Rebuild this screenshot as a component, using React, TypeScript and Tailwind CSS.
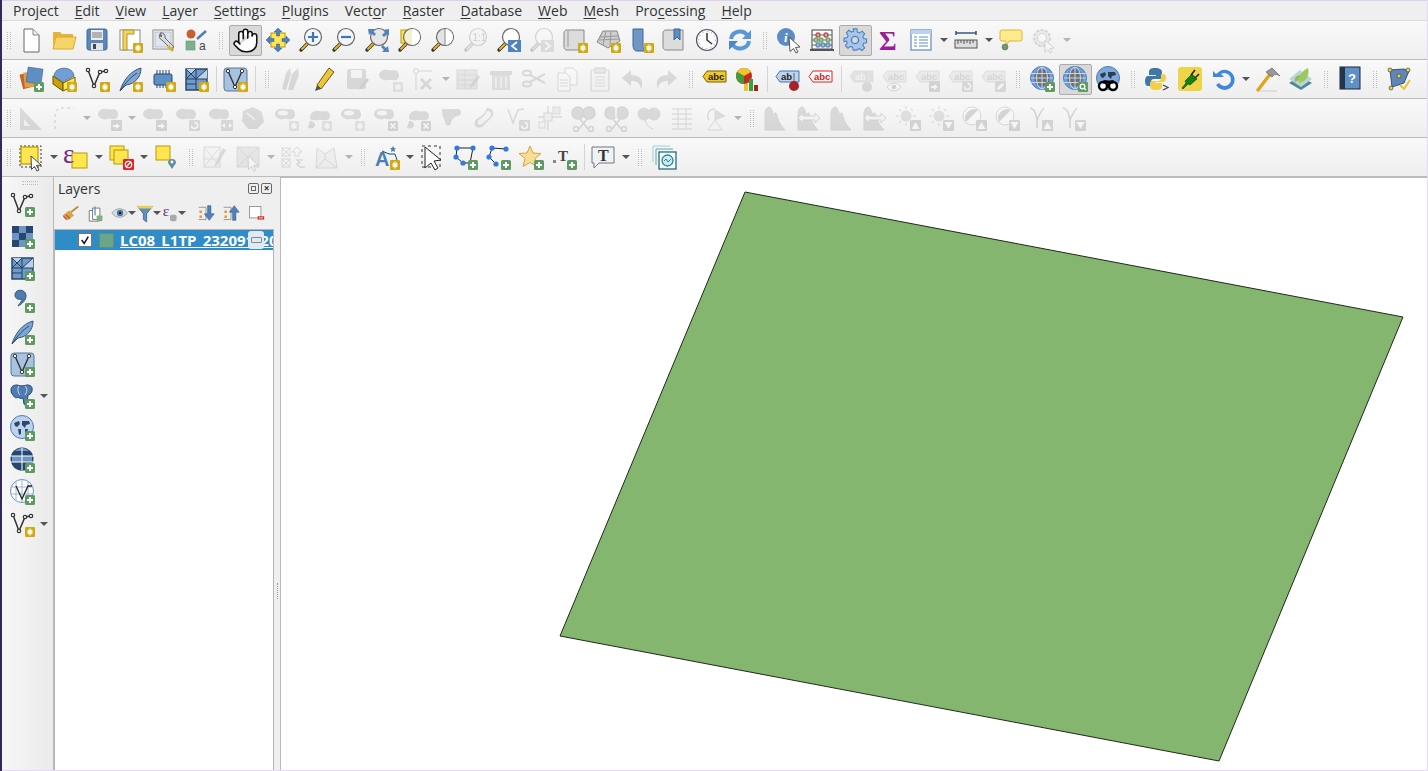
import type { ReactNode } from "react";
import { Hand } from "lucide-react";

const PlusB = () => (
  <g>
    <rect x="15" y="15" width="10" height="10" rx="1.5" fill="#5f9a62" />
    <path d="M20 17v6M17 20h6" stroke="#fff" strokeWidth="2" />
  </g>
);
const StarB = () => (
  <g>
    <rect x="15" y="15" width="10" height="10" rx="1" fill="#d3a912" />
    <path d="M20 16.5v7M17 20h6M17.8 17.8l4.4 4.4M22.2 17.8l-4.4 4.4" stroke="#fff" strokeWidth="1.2" />
  </g>
);
const ArrB = ({ d = "M17 20h3v-2l4 3-4 3v-2h-3z" }: { d?: string }) => (
  <g>
    <rect x="14" y="14" width="11" height="11" rx="1" fill="#777" />
    <path d={d} transform="translate(-1 -1)" fill="#fff" />
  </g>
);
const RotB = () => (
  <g>
    <rect x="14" y="14" width="11" height="11" rx="1" fill="#888" />
    <path d="M16.5 19.5a3 3 0 1 0 3-3" fill="none" stroke="#fff" strokeWidth="1.5" />
  </g>
);
const CrossB = () => (
  <g>
    <rect x="15" y="15" width="10" height="10" rx="1" fill="#777" />
    <path d="M17.5 17.5l5 5M22.5 17.5l-5 5" stroke="#fff" strokeWidth="1.6" />
  </g>
);
const UpB = () => (
  <g>
    <rect x="14" y="14" width="11" height="11" rx="1" fill="#777" />
    <path d="M19.5 16l4 7h-8z" fill="#fff" />
  </g>
);
const DownB = () => (
  <g>
    <rect x="14" y="14" width="11" height="11" rx="1" fill="#777" />
    <path d="M19.5 23l4-7h-8z" fill="#fff" />
  </g>
);

const Mag = ({ fill = "#f2f5fa", children, handle = "#e8b820" }: { fill?: string; children?: ReactNode; handle?: string }) => (
  <g>
    <path d="M9 15L2 22" stroke="#333" strokeWidth="3.4" strokeLinecap="round" />
    <path d="M8.5 15.5L2.5 21.5" stroke={handle} strokeWidth="1.8" />
    <circle cx="14" cy="9" r="8.5" fill={fill} stroke="#666" strokeWidth="1.2" />
    {children}
  </g>
);
const Vline = () => (
  <g fill="#fff" stroke="#333" strokeWidth="1.2">
    <path d="M3 3l6 16 6-14 6-1" fill="none" strokeWidth="1.5" />
    <circle cx="3" cy="3" r="1.7" />
    <circle cx="9" cy="19" r="1.7" />
    <circle cx="15" cy="5" r="1.7" />
    <circle cx="21" cy="4" r="1.7" />
  </g>
);
const Feather = () => (
  <g>
    <path d="M2 24C5 14 12 4 23 1c0 9-6 16-15 17z" fill="#7ea6d2" stroke="#34577f" />
    <path d="M2 24C8 15 13 10 19 6" stroke="#28496e" fill="none" />
  </g>
);
const Chip = () => (
  <g>
    <rect x="3" y="7" width="18" height="11" rx="1.5" fill="#5b8fc6" stroke="#27486e" />
    <path d="M6 3v4M9 3v4M12 3v4M15 3v4M18 3v4M6 18v3M9 18v3M12 18v3M15 18v3M18 18v3" stroke="#27486e" />
  </g>
);
const Mesh = () => (
  <g>
    <rect x="2" y="2" width="21" height="21" fill="#6f9acb" stroke="#23405f" strokeWidth="1.4" />
    <path d="M2 2h10L7 7zM12 12l11-10v10z" fill="#bdd0e6" />
    <path d="M2 2l10 10M12 2L2 12M12 2v21M2 12h21M2 17h10M23 2L12 12" stroke="#23405f" />
  </g>
);
const Virtual = () => (
  <g>
    <rect x="1" y="1" width="23" height="23" rx="3" fill="#a8c3e0" stroke="#55779c" />
    <path d="M5 4l7 16 7-16" fill="none" stroke="#333" strokeWidth="1.4" />
    <circle cx="5" cy="4" r="1.7" fill="#fff" stroke="#333" />
    <circle cx="12" cy="20" r="1.7" fill="#fff" stroke="#333" />
    <circle cx="19" cy="4" r="1.7" fill="#fff" stroke="#333" />
  </g>
);
const GridGlobe = () => (
  <g>
    <circle cx="12" cy="11" r="11.5" fill="#6fa0dc" stroke="#4f7cb4" />
    <ellipse cx="12" cy="11" rx="8" ry="9" fill="#707070" />
    <path d="M1 6.5h22M1 11h22M1 15.5h22M12 0v22" stroke="#c4d8f2" />
    <ellipse cx="12" cy="11" rx="5.5" ry="11" fill="none" stroke="#c4d8f2" />
  </g>
);
const MapGlobe = ({ fill = "#bcd2ee", dark = "#2e4766" }: { fill?: string; dark?: string }) => (
  <g>
    <circle cx="12" cy="11" r="11.5" fill={fill} stroke="#4f7cb4" />
    <path d="M4 7l5-2 1 3-3 3-2-1zM12 5l7 0 1 3-4 1-1 3-3-3zM8 13l3 0 0 5-2 1zM15 13l3 0-1 4-2-1z" fill={dark} />
  </g>
);
const Blob = () => <path d="M1 8c0-4 5-6 9-5s8-1 10 2 1 7-2 8-5-1-8 0-9-1-9-5z" fill="#8a8a86" />;
const AbcTag = ({ fill = "#efc92a", stroke = "#7a6100", text = "abc", color = "#222" }: { fill?: string; stroke?: string; text?: string; color?: string }) => (
  <g>
    <path d="M5 4h19v11H5L1 9.5z" fill={fill} stroke={stroke} />
    <text x="6" y="13" fontSize="9.5" fontWeight="700" fill={color} fontFamily="Liberation Sans, sans-serif">{text}</text>
  </g>
);
const Scissor = () => (
  <g fill="none" stroke="#777" strokeWidth="1.5">
    <ellipse cx="7" cy="7" rx="6" ry="6" fill="#8a8a86" />
    <ellipse cx="18" cy="7" rx="6" ry="6" fill="#8a8a86" />
    <path d="M9 13l8 10M16 13L8 23" />
    <circle cx="5" cy="23" r="2.4" />
    <circle cx="20" cy="23" r="2.4" />
  </g>
);
const Histo = () => <path d="M1 24V8c0-4 2-7 4-7s3 3 4 6 2-1 3 0 1 9 9 17z" fill="#8a8a86" stroke="#777" />;
const HistoArrows = () => (
  <g>
    <Histo />
    <path d="M1 12l5-5v3h12V7l5 5-5 5v-3H6v3z" fill="#eee" stroke="#777" />
  </g>
);
const Sun = () => (
  <g>
    <circle cx="10" cy="10" r="5.5" fill="#a5a070" />
    <path d="M10 0v3M10 17v3M0 10h3M17 10h3M3 3l2 2M15 3l2 2M3 17l2-2" stroke="#a5a070" strokeWidth="1.3" />
  </g>
);
const Contrast = () => (
  <g>
    <circle cx="10" cy="10" r="9" fill="#fff" stroke="#777" />
    <path d="M4 16A9 9 0 0 1 16 4z" fill="#777" />
  </g>
);
const Gamma = () => <path d="M2 2c5 1 6 6 7 12v8M16 2c-3 3-5 7-7 12" fill="none" stroke="#777" strokeWidth="1.6" />;
const Sel = () => <rect x="2" y="2" width="17" height="17" fill="#ffe54f" stroke="#b89a00" strokeWidth="1.2" />;
const Arrow = () => <path d="M12 11l10 9-4.5.5 2.5 4.5-2 1-2.5-4.5-3 3z" fill="#fff" stroke="#333" strokeWidth="0.9" />;

const icons: Record<string, ReactNode> = {
  new: (
    <g>
      <path d="M5 1h9l6 6v17H5z" fill="#fff" stroke="#666" />
      <path d="M14 1v6h6" fill="#eee" stroke="#888" />
    </g>
  ),
  open: (
    <g>
      <path d="M1 4h7l2 2h11v5H3l-2 8z" fill="#e4b53a" />
      <path d="M4 9h20l-3 12H1z" fill="#f6d568" stroke="#d8a92c" />
    </g>
  ),
  save: (
    <g>
      <rect x="2" y="1" width="20" height="21" rx="2" fill="#5b86b8" stroke="#3f6a9c" />
      <rect x="6" y="2" width="12" height="10" fill="#eee" />
      <path d="M7 5h10M7 7h10M7 9h10" stroke="#777" />
      <rect x="6" y="15" width="12" height="7" fill="#e4e4e4" />
      <rect x="8" y="16" width="3" height="5" fill="#445" />
    </g>
  ),
  layoutNew: (
    <g>
      <rect x="2" y="2" width="20" height="20" fill="#fff" stroke="#888" />
      <path d="M5 2h11v4H9v16H5z" fill="#f2d45c" stroke="#b5932a" />
      <StarB />
    </g>
  ),
  layoutMgr: (
    <g>
      <rect x="2" y="2" width="20" height="19" fill="#fff" stroke="#888" />
      <rect x="4" y="4" width="16" height="15" fill="#dbe6f2" stroke="#bbb" />
      <path d="M9 6a4 4 0 0 0 2 6l9 9 3-2-9-9a4 4 0 0 0-5-5l2 3-1 1z" fill="#ddd" stroke="#666" />
      <path d="M17 18l5 5" stroke="#d5b33a" strokeWidth="3" />
    </g>
  ),
  style: (
    <g>
      <circle cx="7" cy="6" r="4.5" fill="#c55f2c" />
      <rect x="2" y="13" width="9" height="9" fill="#7fb08a" stroke="#598" strokeWidth="0.6" />
      <path d="M13 11l9-8" stroke="#4f7cb4" strokeWidth="2.4" />
      <text x="15" y="22" fontSize="12" fill="#444" fontFamily="Liberation Sans, sans-serif">a</text>
    </g>
  ),
  panSel: (
    <g>
      <rect x="5" y="5" width="14" height="14" fill="#ffe54f" stroke="#b89a00" />
      <path d="M12 0l4 4h-2.5v4h-3V4H8zM12 24l4-4h-2.5v-4h-3v4H8zM0 12l4-4v2.5h4v3H4V16zM24 12l-4-4v2.5h-4v3h4V16z" fill="#4f82bf" stroke="#2f5d93" strokeWidth="0.5" />
    </g>
  ),
  zoomIn: <Mag><path d="M14 4v10M9 9h10" stroke="#3f74b5" strokeWidth="2.2" /></Mag>,
  zoomOut: <Mag><path d="M9 9h10" stroke="#3f74b5" strokeWidth="2.2" /></Mag>,
  zoomFull: (
    <g>
      <Mag fill="#e6e6e6" />
      <path d="M3 1h7L8 3l3 3-2 2-3-3-2 2zM24 1v7l-2-2-3 3-2-2 3-3-2-2zM24 24h-7l2-2-3-3 2-2 3 3 2-2z" fill="#4f82bf" />
    </g>
  ),
  zoomSel: (
    <g>
      <rect x="3" y="2" width="13" height="13" fill="#ffe54f" stroke="#b89a00" />
      <Mag fill="#f3efd0" />
      <path d="M14 1a8 8 0 0 1 0 16z" fill="#fff" />
    </g>
  ),
  zoomLayer: (
    <g>
      <Mag fill="#e4e4e4" />
      <path d="M14 1a8 8 0 0 1 0 16z" fill="#fff" />
      <path d="M14 1v16" stroke="#888" />
    </g>
  ),
  zoomNative: <Mag><text x="8.5" y="13" fontSize="10" fill="#555" fontFamily="Liberation Sans, sans-serif">1:1</text></Mag>,
  zoomLast: (
    <g>
      <Mag fill="#fff" />
      <rect x="11" y="12" width="13" height="12" fill="#4f82bf" />
      <path d="M20 14l-5 4 5 4" fill="none" stroke="#fff" strokeWidth="1.8" />
    </g>
  ),
  zoomNext: (
    <g>
      <Mag fill="#fff" handle="#aaa" />
      <rect x="11" y="12" width="13" height="12" fill="#999" />
      <path d="M15 14l5 4-5 4" fill="none" stroke="#fff" strokeWidth="1.8" />
    </g>
  ),
  mapView: (
    <g>
      <path d="M4 2h17v20H4c-3 0-3-3-3-3V5s0-3 3-3z" fill="#dcdcdc" stroke="#888" />
      <path d="M5 3v16" stroke="#999" />
      <StarB />
    </g>
  ),
  map3d: (
    <g>
      <path d="M7 3h14l3 10-12 7L1 14z" fill="#cfcfcf" stroke="#888" />
      <path d="M4 9l18-1M3 12l20-1M10 3L7 17M15 3l-1 15" stroke="#999" />
      <StarB />
    </g>
  ),
  bookmarkNew: (
    <g>
      <path d="M4 1h10v16c0 4 2 6 4 6H8c-3 0-4-3-4-6z" fill="#6f97c6" stroke="#3d6696" />
      <StarB />
    </g>
  ),
  bookmarks: (
    <g>
      <path d="M4 2h17v20H4c-3 0-3-3-3-3V5s0-3 3-3z" fill="#dcdcdc" stroke="#888" />
      <path d="M12 1h6v11l-3-3-3 3z" fill="#5b8cc4" stroke="#3d6696" />
    </g>
  ),
  clock: (
    <g>
      <circle cx="12" cy="12" r="10.5" fill="#fbfbfb" stroke="#556" strokeWidth="1.2" />
      <path d="M12 5v7l5 4" stroke="#333" strokeWidth="1.5" fill="none" />
      <circle cx="12" cy="12" r="8.5" fill="none" stroke="#89a" strokeDasharray="1 3.4" />
    </g>
  ),
  refresh: (
    <g fill="none" stroke="#5b97d6" strokeWidth="4">
      <path d="M3 11C4 3 15 1 19 7" />
      <path d="M21 13c-1 8-12 10-16 4" />
      <path d="M23 2v9h-9z" fill="#5b97d6" stroke="none" />
      <path d="M1 22v-9h9z" fill="#4d86c4" stroke="none" />
    </g>
  ),
  identify: (
    <g>
      <circle cx="9" cy="9" r="9" fill="#5b8cc4" />
      <text x="7" y="14" fontSize="13" fontWeight="700" fontStyle="italic" fill="#fff" fontFamily="Liberation Serif, serif">i</text>
      <path d="M12 9l11 10-4.500.5 2.500 4.500-2 1-2.500-4.500-3.500 3z" fill="#fff" stroke="#444" strokeWidth="0.9" />
    </g>
  ),
  abacus: (
    <g>
      <rect x="2" y="2" width="20" height="19" fill="#fff" stroke="#444" />
      <path d="M0 22h24" stroke="#555" strokeWidth="2" />
      <path d="M2 7h20M2 12h20M2 17h20" stroke="#666" />
      <g fill="none" strokeWidth="1.4">
        <g stroke="#c0504d"><circle cx="8" cy="7" r="2" /><circle cx="16" cy="7" r="2" /></g>
        <g stroke="#70a868"><circle cx="6" cy="12" r="2" /><circle cx="11" cy="12" r="2" /><circle cx="18" cy="12" r="2" /></g>
        <g stroke="#5b8cc4"><circle cx="8" cy="17" r="2" /><circle cx="13" cy="17" r="2" /><circle cx="18" cy="17" r="2" /></g>
      </g>
    </g>
  ),
  gear: (
    <g>
      <path d="M10 1h4l.6 3.4 2.2 1 2.9-2 2.8 2.9-2 2.9.9 2.2 3.1.6v4l-3.1.6-.9 2.2 2 2.9-2.8 2.8-2.9-2-2.2.9L14 24h-4l-.6-3.1-2.2-.9-2.9 2-2.8-2.8 2-2.9-.9-2.2L0 15v-4l3.6-.6.9-2.2-2-2.9L5.3 2.400l2.900 2 2.200-1z" transform="translate(1 0) scale(0.92)" fill="#a8c6ea" stroke="#4f82bf" strokeWidth="1.2" />
      <circle cx="12" cy="12" r="3.6" fill="#d8d8d8" stroke="#4f82bf" strokeWidth="1.4" />
    </g>
  ),
  sigma: <text x="3" y="22" fontSize="27" fontWeight="700" fill="#9a1d9a" fontFamily="Liberation Serif, serif">Σ</text>,
  table: (
    <g>
      <rect x="2" y="2" width="20" height="20" fill="#fff" stroke="#5b8cc4" strokeWidth="1.2" />
      <rect x="2" y="2" width="20" height="4" fill="#bcd2ea" />
      <path d="M5 9h3M10 9h9M5 12h3M10 12h9M5 15h3M10 15h9M5 18h3M10 18h9" stroke="#5b8cc4" />
    </g>
  ),
  ruler: (
    <g>
      <path d="M2 5h20M2 3v4M22 3v4" stroke="#3d5a7c" strokeWidth="1.6" />
      <rect x="1" y="12" width="22" height="8" fill="#ddd" stroke="#555" />
      <path d="M4 12v4M7 12v3M10 12v4M13 12v3M16 12v4M19 12v3" stroke="#555" />
    </g>
  ),
  tip: (
    <g>
      <path d="M3 2h18a2 2 0 0 1 2 2v7a2 2 0 0 1-2 2H10l-3 5v-5H3a2 2 0 0 1-2-2V4a2 2 0 0 1 2-2z" fill="#fdeb8e" stroke="#d9b83a" />
      <circle cx="6" cy="19" r="3" fill="#6f9a6a" stroke="#555" strokeWidth="0.5" />
    </g>
  ),
  gearPlay: (
    <g>
      <circle cx="10" cy="10" r="8" fill="#ccc" stroke="#777" strokeWidth="2" strokeDasharray="3 1.5" />
      <circle cx="10" cy="10" r="4.5" fill="#fff" stroke="#777" />
      <path d="M13 12l9 8-4 .5 2 3.5-2 1-2-3.5-3 3z" fill="#fff" stroke="#777" />
    </g>
  ),
  layers: (
    <g>
      <rect x="2" y="6" width="13" height="15" transform="rotate(-14 8 13)" fill="#c8622c" />
      <rect x="5" y="5" width="13" height="15" transform="rotate(-6 11 12)" fill="#e0a040" />
      <rect x="8" y="1" width="15" height="15" transform="rotate(8 15 9)" fill="#5f8ec4" stroke="#3d6696" strokeWidth="0.6" />
      <PlusB />
    </g>
  ),
  gpkg: (
    <g>
      <path d="M1 9l10 7v8L1 17z" fill="#c9a400" stroke="#665300" />
      <path d="M11 16l12-6v8l-12 6z" fill="#ffe54f" stroke="#665300" />
      <path d="M2 9a10 8 0 0 1 20 0l-11 6z" fill="#6f9fd8" stroke="#444" strokeWidth="0.5" />
      <StarB />
    </g>
  ),
  vline: <g><Vline /><StarB /></g>,
  vlinePlus: <g><Vline /><PlusB /></g>,
  feather: <g><Feather /><StarB /></g>,
  featherPlus: <g><Feather /><PlusB /></g>,
  chip: <g><Chip /><StarB /></g>,
  mesh: <g><Mesh /><StarB /></g>,
  meshPlus: <g><Mesh /><PlusB /></g>,
  virtual: <g><Virtual /><StarB /></g>,
  virtualPlus: <g><Virtual /><PlusB /></g>,
  pencils: (
    <g fill="#888">
      <path d="M3 22L7 6l4-5 1 6-5 16z" />
      <path d="M9 23l4-16 6-6 1 7-6 15z" />
    </g>
  ),
  pencil: (
    <g>
      <path d="M5 18L17 1l5 4L9 22z" fill="#ebc63d" stroke="#6d5a10" />
      <path d="M5 18l-2 6 6-2z" fill="#555" />
    </g>
  ),
  saveEdits: (
    <g>
      <rect x="2" y="2" width="19" height="20" rx="2" fill="#888" />
      <rect x="6" y="3" width="11" height="8" fill="#eee" />
      <path d="M14 23l2-5 6-7 2 2-6 7z" fill="#666" />
    </g>
  ),
  blobStar: <g><Blob /><StarB /></g>,
  tools: (
    <g>
      <circle cx="5" cy="4" r="2.5" fill="none" stroke="#777" />
      <path d="M7 4h14M5 7v16" stroke="#777" />
      <path d="M10 12l10 10M20 12L10 22" stroke="#888" strokeWidth="3" />
    </g>
  ),
  editTable: (
    <g>
      <rect x="1" y="3" width="20" height="19" fill="#bbb" stroke="#888" />
      <path d="M1 8h20M1 13h20M1 18h20M9 3v19" stroke="#888" />
      <path d="M13 22l2-5 7-9 2 2-7 9z" fill="#777" />
    </g>
  ),
  trash: (
    <g>
      <path d="M1 4h22v4H1z" fill="#9a8a86" />
      <path d="M3 8h18v15H3z" fill="#aaa09c" />
      <path d="M7 10v11M12 10v11M17 10v11" stroke="#eee" strokeWidth="1.4" />
    </g>
  ),
  scissors: (
    <g fill="none" stroke="#888" strokeWidth="2">
      <ellipse cx="5" cy="6" rx="4" ry="2.6" />
      <ellipse cx="5" cy="17" rx="4" ry="2.6" />
      <path d="M8 8l15 8M8 15l15-8" />
    </g>
  ),
  copy: (
    <g fill="#fff" stroke="#888">
      <path d="M10 1h8l4 4v13H10z" />
      <path d="M3 6h8l4 4v14H3z" />
      <path d="M5 13h8M5 16h8M5 19h8" />
    </g>
  ),
  paste: (
    <g fill="#eee" stroke="#888" strokeWidth="1.2">
      <rect x="3" y="3" width="18" height="21" rx="1" />
      <rect x="7" y="1" width="10" height="5" fill="#bbb" />
      <path d="M7 10h10M7 13h10M7 16h10M7 19h10" />
    </g>
  ),
  undo: <path d="M10 3L1 11l9 8v-5c6 0 9 2 10 8 3-7 1-14-10-14z" fill="#8a8a86" />,
  redo: <path d="M14 3l9 8-9 8v-5c-6 0-9 2-10 8-3-7-1-14 10-14z" fill="#8a8a86" />,
  abcYellow: <AbcTag />,
  pieBars: (
    <g>
      <circle cx="9" cy="9" r="8" fill="#c8261e" />
      <path d="M9 9V1a8 8 0 0 1 7 4z" fill="#ecc62a" />
      <path d="M9 9L2 5a8 8 0 0 1 7-4z" fill="#ecc62a" />
      <path d="M9 9v8a8 8 0 0 1-8-8 8 8 0 0 1 1-4z" fill="#3f9d3a" />
      <rect x="9" y="17" width="4" height="7" fill="#ecc62a" />
      <rect x="14" y="12" width="4" height="12" fill="#3f9d3a" />
      <rect x="19" y="18" width="4" height="6" fill="#a3261e" />
    </g>
  ),
  abPin: (
    <g>
      <AbcTag fill="#bcd4ee" stroke="#3f74b5" text="ab" />
      <path d="M19 6v9" stroke="#888" strokeWidth="1.5" />
      <circle cx="19" cy="19" r="5" fill="#a5242a" />
    </g>
  ),
  abcRed: <AbcTag fill="#fff" stroke="#e51c1c" color="#d61c1c" />,
  abPinGrey: (
    <g>
      <AbcTag fill="#aaa" stroke="#999" text="ab" color="#eee" />
      <path d="M17 5v11" stroke="#999" strokeWidth="1.5" />
      <circle cx="18" cy="20" r="5" fill="#8a8a86" />
    </g>
  ),
  abcEye: (
    <g>
      <AbcTag fill="#ccc" stroke="#999" color="#777" />
      <path d="M5 20c4-5 10-5 14 0-4 5-10 5-14 0z" fill="#fff" stroke="#777" />
      <circle cx="12" cy="20" r="2.3" fill="#777" />
    </g>
  ),
  abcArrow: <g><AbcTag fill="#ccc" stroke="#999" color="#777" /><ArrB /></g>,
  abcRotate: <g><AbcTag fill="#ccc" stroke="#999" color="#777" /><RotB /></g>,
  abcEdit: (
    <g>
      <AbcTag fill="#ccc" stroke="#999" color="#777" />
      <rect x="14" y="14" width="11" height="11" rx="1" fill="#888" />
      <path d="M16 23l1-3 4-4 2 2-4 4z" fill="#fff" />
    </g>
  ),
  globePlus: <g><GridGlobe /><PlusB /></g>,
  globeZoom: (
    <g>
      <GridGlobe />
      <rect x="15" y="15" width="10" height="10" rx="1" fill="#5f9a62" />
      <circle cx="19.5" cy="19.5" r="2.3" fill="none" stroke="#fff" strokeWidth="1.3" />
      <path d="M21 21l2 2" stroke="#fff" strokeWidth="1.3" />
    </g>
  ),
  globeFind: (
    <g>
      <MapGlobe fill="#7ea8da" dark="#2e3c4f" />
      <circle cx="7" cy="19" r="4" fill="#fff" stroke="#000" strokeWidth="2.4" />
      <circle cx="17" cy="19" r="4" fill="#fff" stroke="#000" strokeWidth="2.4" />
      <path d="M7 15h10" stroke="#000" strokeWidth="3" />
    </g>
  ),
  python: (
    <g>
      <path d="M10 1c-5 0-6 2-6 4v3h7v1H3c-2 0-3 2-3 5s1 5 3 5h3v-4c0-2 1-3 3-3h6c1 0 2-1 2-2V5c0-2-2-4-7-4z" fill="#3f78a8" />
      <path d="M11 23c5 0 6-2 6-4v-3h-7v-1h8c2 0 3-2 3-5 0-2-1-3-3-3h-2v4c0 2-1 3-3 3H7c-1 0-2 1-2 2v3c0 2 1 4 6 4z" fill="#f2cf4a" />
      <path d="M18 18l5 2.5-5 2.5" fill="none" stroke="#444" strokeWidth="1.2" />
    </g>
  ),
  plug: (
    <g>
      <rect x="0" y="0" width="24" height="24" rx="3" fill="#f0d448" />
      <path d="M4 21l4-5-1-2 7-7 5 5-7 6-2-1-5 5z" fill="#128012" stroke="#0b400b" strokeWidth="0.6" />
      <path d="M13 8l4-5M17 11l4-4" stroke="#222" strokeWidth="1.6" />
    </g>
  ),
  update: <path d="M8 4a10 10 0 1 1-4 14l3-2a6.5 6.5 0 1 0 2-9l3 3H1V4l3 3z" transform="translate(1 0)" fill="#3f87dc" />,
  hammer: (
    <g>
      <path d="M2 23L15 6" stroke="#e2a41c" strokeWidth="3.4" strokeLinecap="round" />
      <path d="M10 5l6-4 8 8c-3-2-5-2-6-1l-2 2z" fill="#999" stroke="#555" strokeWidth="0.6" />
      <path d="M3 24h18" stroke="#ccc" />
    </g>
  ),
  leaf: (
    <g>
      <path d="M0 16l11-7 12 7-11 7z" fill="#4f8a9a" />
      <path d="M0 12L11 3l12 9-11 8z" fill="#bed3d3" />
      <path d="M6 15c-1-5 2-7 6-7-1 4-3 6-6 7z" fill="#86bf55" />
      <path d="M10 16c-2-6 3-12 9-15 2 7-2 14-9 15z" fill="#9cc95f" />
    </g>
  ),
  help: (
    <g>
      <rect x="2" y="0" width="20" height="22" fill="#5f90c6" stroke="#223" />
      <rect x="2" y="0" width="5" height="22" fill="#24344a" />
      <text x="10" y="16" fontSize="13" fontWeight="700" fill="#fff" fontFamily="Liberation Sans, sans-serif">?</text>
    </g>
  ),
  topo: (
    <g>
      <path d="M3 3l14-1 5 2-5 12-12 4z" fill="#5f86b4" stroke="#33557c" />
      <circle cx="3" cy="3" r="2" fill="#ecd24a" stroke="#444" strokeWidth="0.7" />
      <circle cx="21" cy="3" r="2" fill="#ecd24a" stroke="#444" strokeWidth="0.7" />
      <circle cx="12" cy="9" r="2" fill="#ecd24a" stroke="#444" strokeWidth="0.7" />
      <circle cx="4" cy="21" r="2" fill="#ecd24a" stroke="#444" strokeWidth="0.7" />
      <path d="M13 18l4 4 6-9" fill="none" stroke="#e8c52f" strokeWidth="2" />
    </g>
  ),
  triangle: (
    <g>
      <path d="M1 1l22 23H1z" fill="#8a8a86" />
      <path d="M5 13l6 7H5z" fill="#eee" />
    </g>
  ),
  dashCurve: <path d="M3 23V9c0-4 3-7 8-7h11" fill="none" stroke="#888" strokeWidth="1.5" strokeDasharray="3 3" />,
  blobArr: <g><Blob /><ArrB /></g>,
  blobRot: <g><Blob /><RotB /></g>,
  blobScale: <g><Blob /><rect x="13" y="14" width="12" height="11" rx="1" fill="#888" /><path d="M14 19.5l3-2.500v5zM24 19.5L21 17v5z" fill="#fff" /></g>,
  hex: <g><path d="M12 1l9 5 2 10-7 7H7l-6-8 1-10z" fill="#8a8a86" /><path d="M6 7l8 7" stroke="#eee" strokeWidth="1.5" /></g>,
  ringStar: <g><Blob /><ellipse cx="9" cy="7" rx="5" ry="2.5" fill="#eee" /><StarB /></g>,
  partStar: <g><path d="M3 12c0-6 5-8 9-7s8-1 10 2 1 6-2 7-5-1-8 0-9 0-9-2z" fill="#8a8a86" /><path d="M1 22l2-7c3 0 5 1 5 4s-3 4-7 3z" fill="#8a8a86" /><StarB /></g>,
  ringCross: <g><Blob /><ellipse cx="9" cy="7" rx="5" ry="2.5" fill="#eee" /><CrossB /></g>,
  partCross: <g><path d="M3 12c0-6 5-8 9-7s8-1 10 2 1 6-2 7-5-1-8 0-9 0-9-2z" fill="#8a8a86" /><path d="M1 22l2-7c3 0 5 1 5 4s-3 4-7 3z" fill="#8a8a86" /><CrossB /></g>,
  reshape: <path d="M3 3h16c4 0 4 6 0 7-4 1-6 3-7 7s-6 3-6-1-3-3-3-13z" fill="#8a8a86" />,
  offset: <g><path d="M15 2c7 0 8 6 4 10l-8 8c-5 4-10 0-8-5 2-4 8-3 12-13z" fill="#8a8a86" /><path d="M15 5c4 0 5 3 3 6l-8 7c-3 2-5 0-4-3 2-3 6-3 9-10z" fill="#eee" /></g>,
  vnode: (
    <g>
      <path d="M3 3l5 14 5-13 6-1" fill="none" stroke="#888" strokeWidth="1.5" />
      <RotB />
    </g>
  ),
  split: (
    <g stroke="#888" fill="none">
      <path d="M10 0v24M0 11h24" strokeWidth="1.4" />
      <rect x="6" y="7" width="8" height="8" fill="#ddd" />
      <rect x="15" y="1" width="7" height="7" fill="#ccc" />
      <rect x="1" y="16" width="6" height="6" fill="#eee" />
    </g>
  ),
  scissorA: <Scissor />,
  scissorB: <g><Scissor /><path d="M12 2v9" stroke="#fff" strokeWidth="1.5" /></g>,
  merge: (
    <g>
      <ellipse cx="7" cy="8" rx="6.500" ry="6.500" fill="#8a8a86" />
      <ellipse cx="17" cy="8" rx="6.500" ry="6.500" fill="#8a8a86" />
      <path d="M8 14c2 6 5 8 8 9M8 5h8M8 8h8M8 11h8" stroke="#777" fill="none" />
    </g>
  ),
  stack: <path d="M2 3h20M2 8h20M2 13h20M2 18h20M2 23h20M8 3v20M16 3v20" stroke="#999" strokeWidth="1.3" fill="none" />,
  rotatePt: (
    <g fill="none" stroke="#888">
      <path d="M12 4L22 10 12 14z" fill="#999" />
      <path d="M12 14L5 24h14z" />
      <path d="M6 14A7 7 0 0 1 12 3" strokeWidth="1.5" />
    </g>
  ),
  histo: <Histo />,
  histoArrows: <HistoArrows />,
  sunUp: <g><Sun /><UpB /></g>,
  sunDown: <g><Sun /><DownB /></g>,
  contrastUp: <g><Contrast /><UpB /></g>,
  contrastDown: <g><Contrast /><DownB /></g>,
  gammaUp: <g><Gamma /><UpB /></g>,
  gammaDown: <g><Gamma /><DownB /></g>,
  selRect: (
    <g>
      <rect x="1" y="1" width="21" height="21" fill="none" stroke="#333" strokeDasharray="2 2" />
      <Sel />
      <Arrow />
    </g>
  ),
  selExpr: (
    <g>
      <rect x="8" y="8" width="15" height="15" fill="#ffe54f" stroke="#b89a00" />
      <text x="-1" y="18" fontSize="27" fill="#6a2c80" fontFamily="Liberation Serif, serif">ε</text>
    </g>
  ),
  deselect: (
    <g>
      <rect x="1" y="1" width="14" height="14" fill="#ffe54f" stroke="#b89a00" />
      <rect x="5" y="5" width="14" height="14" fill="#ffe54f" stroke="#b89a00" />
      <rect x="14" y="14" width="11" height="11" rx="1" fill="#e3232a" />
      <circle cx="19.5" cy="19.5" r="3.2" fill="none" stroke="#fff" strokeWidth="1.2" />
      <path d="M17 22l5-5" stroke="#fff" strokeWidth="1.2" />
    </g>
  ),
  selLoc: (
    <g>
      <rect x="2" y="1" width="14" height="14" fill="#ffe54f" stroke="#b89a00" />
      <path d="M18 24l-4-6a4 4 0 1 1 8 0z" fill="#5f8f9f" />
      <circle cx="18" cy="17" r="1.4" fill="#fff" />
    </g>
  ),
  editAttr: (
    <g>
      <rect x="1" y="2" width="16" height="20" fill="#eee" stroke="#888" />
      <path d="M1 2l16 20M17 2L1 22M1 14h16" stroke="#999" />
      <path d="M11 22l2-5 7-14 3 2-8 14z" fill="#888" />
    </g>
  ),
  editAttrSel: (
    <g>
      <rect x="1" y="2" width="22" height="20" fill="#bbb" stroke="#888" />
      <path d="M1 2l22 20M23 2L1 22" stroke="#888" />
      <path d="M12 11l10 9-4.5.5 2.5 4.500-2 1-2.500-4.500-3 3z" fill="#fff" stroke="#777" />
    </g>
  ),
  exprBox: (
    <g fill="none" stroke="#888">
      <rect x="1" y="3" width="8" height="8" />
      <path d="M1 3l8 8M9 3l-8 8" />
      <rect x="1" y="14" width="8" height="8" />
      <path d="M1 14l8 8M9 14l-8 8" />
      <path d="M16 2l5 5h-3v4h-4V7h-3z" />
      <path d="M22 15h-6l3 3-3 1 3 3h5" strokeWidth="1.4" />
    </g>
  ),
  vertexGrid: (
    <g fill="none" stroke="#888">
      <path d="M3 3l8 6 9-6 3 20H2z" fill="#ddd" />
      <path d="M11 9v5l-9 9M11 14l12 9" />
    </g>
  ),
  labelA: (
    <g>
      <text x="0" y="21" fontSize="20" fontWeight="700" fill="#4a7fb8" fontFamily="Liberation Sans, sans-serif">A</text>
      <path d="M7 6l7 3 6 0 2 6" fill="none" stroke="#27486e" />
      <path d="M18 1l1 2 2 .2-1.500 1.500.4 2.300-1.900-1-2 1 .5-2.300-1.500-1.500 2-.2z" fill="#4a7fb8" />
      <StarB />
    </g>
  ),
  selectItem: (
    <g>
      <rect x="2" y="1" width="18" height="21" fill="none" stroke="#333" strokeDasharray="3 3" />
      <path d="M5 2l16 13-7 1 4 7-3 2-4-7-6 5z" fill="#fff" stroke="#222" />
    </g>
  ),
  polyAdd: (
    <g>
      <path d="M4 3h16l-3 15H10L3 12z" fill="none" stroke="#222" />
      <g fill="#2f7be0">
        <circle cx="4" cy="3" r="2.6" /><circle cx="20" cy="3" r="2.6" /><circle cx="3" cy="12" r="2.6" /><circle cx="10" cy="18" r="2.6" />
      </g>
      <PlusB />
    </g>
  ),
  lineAdd: (
    <g>
      <path d="M6 3l14 1M6 3l-3 9 7 7" fill="none" stroke="#222" />
      <g fill="#2f7be0">
        <circle cx="6" cy="3" r="2.6" /><circle cx="20" cy="4" r="2.6" /><circle cx="3" cy="12" r="2.6" /><circle cx="10" cy="19" r="2.6" />
      </g>
      <PlusB />
    </g>
  ),
  starAdd: (
    <g>
      <path d="M11 1l3 7 8 .5-6 5 2 8-7-4-7 4 2-8-6-5 8-.5z" fill="#f6de92" stroke="#d9a24a" />
      <PlusB />
    </g>
  ),
  textAdd: (
    <g>
      <rect x="1" y="15" width="3" height="3" fill="#888" />
      <text x="6" y="16" fontSize="15" fontWeight="700" fill="#444" fontFamily="Liberation Serif, serif">T</text>
      <PlusB />
    </g>
  ),
  textBox: (
    <g>
      <path d="M1 2h22v16H8l-5 5v-5H1z" fill="#eef3f7" stroke="#777" />
      <text x="7" y="16" fontSize="16" fontWeight="700" fill="#333" fontFamily="Liberation Serif, serif">T</text>
    </g>
  ),
  overview: (
    <g>
      <path d="M1 17V1h17" fill="none" stroke="#9fd0d6" />
      <path d="M4 20V4h17" fill="none" stroke="#5fa8b4" />
      <rect x="7" y="7" width="17" height="17" fill="#fff" stroke="#1e6f80" strokeWidth="1.3" />
      <circle cx="15.5" cy="15.5" r="5.5" fill="#cfe9ec" stroke="#1e8a9a" strokeWidth="1.3" />
      <path d="M12 16l2-2 2 3 3-3" fill="none" stroke="#1e8a9a" />
    </g>
  ),
  rasterPlus: (
    <g>
      <path d="M2 2h7v7H2zM16 2h7v7h-7zM9 9h7v7H9z" fill="#27486e" />
      <path d="M9 2h7v7H9zM2 9h7v7H2zM16 9h7v7h-7zM9 16h7v7H9z" fill="#6d94c2" />
      <path d="M2 16h7v7H2z" fill="#27486e" />
      <PlusB />
    </g>
  ),
  commaPlus: (
    <g>
      <path d="M7 3c4-2 9 0 9 5 0 4-4 8-8 10 2-3 4-5 4-7-3 1-7 0-7-4 0-2 1-3 2-4z" fill="#4f7cb0" stroke="#2f5680" />
      <PlusB />
    </g>
  ),
  pgPlus: (
    <g>
      <path d="M1 6c0-4 3-5 6-5 2 0 3 1 5 1s3-1 5-1c3 0 6 1 5 6-1 3-3 4-4 4l-1 8c0 3-2 3-3 1l-1-6c-2 1-4 0-5-1-2 2-4 0-5-2-1-1-2-2-2-5z" fill="#4f7cb0" stroke="#27486e" />
      <path d="M9 2c-2 3-1 7 1 9M15 2c3 3 2 6 0 9" fill="none" stroke="#cfe0f2" />
      <PlusB />
    </g>
  ),
  wmsPlus: <g><MapGlobe /><PlusB /></g>,
  wcsPlus: (
    <g>
      <circle cx="12" cy="11" r="11.5" fill="#27486e" />
      <path d="M2 8h20v6H2zM12 0a11 11 0 0 1 7 3H5a11 11 0 0 1 7-3z" fill="#6d94c2" />
      <path d="M0 8h24M0 14h24M12 0v22" stroke="#fff" />
      <PlusB />
    </g>
  ),
  wfsPlus: (
    <g>
      <circle cx="12" cy="11" r="11.5" fill="#fff" stroke="#6d94c2" />
      <path d="M1 7h22M1 14h22M12 0v22M6 1v20M18 1v20" stroke="#9ab8dc" />
      <path d="M6 6l6 13 6-13h4" fill="none" stroke="#222" strokeWidth="1.3" />
      <PlusB />
    </g>
  ),
};

type Item = { i: string; a?: boolean; d?: boolean; on?: boolean } | "g" | "g15" | "g17" | "s6" | "s7" | "s8";

const D = (i: string, a?: boolean): Item => ({ i, a, d: true });
const N = (i: string, a?: boolean): Item => ({ i, a });

const row1: Item[] = [
  N("new"), N("open"), N("save"), N("layoutNew"), N("layoutMgr"), N("style"), "g",
  { i: "pan", on: true }, N("panSel"), N("zoomIn"), N("zoomOut"), N("zoomFull"), N("zoomSel"), N("zoomLayer"), D("zoomNative"),
  N("zoomLast"), D("zoomNext"), N("mapView"), N("map3d"), N("bookmarkNew"), N("bookmarks"), N("clock"), N("refresh"), "g",
  N("identify"), N("abacus"), { i: "gear", on: true }, N("sigma"), N("table", true), N("ruler", true), N("tip"), { i: "gearPlay", a: true, d: true },
];
const row2: Item[] = [
  N("layers"), N("gpkg"), N("vline"), N("feather"), N("chip"), N("mesh"), "s6", N("virtual"), "s6", "g17",
  D("pencils"), N("pencil"), D("saveEdits"), D("blobStar"), D("tools", true), D("editTable"), D("trash"), D("scissors"), D("copy"), D("paste"), D("undo"), D("redo"), "g15",
  N("abcYellow"), N("pieBars"), "s7", N("abPin"), N("abcRed"), "s8", D("abPinGrey"), D("abcEye"), D("abcArrow"), D("abcRotate"), D("abcEdit"), "g",
  N("globePlus"), { i: "globeZoom", on: true }, N("globeFind"), "g", N("python"), N("plug"), N("update", true), N("hammer"), N("leaf"), "g", N("help"), "g", N("topo"),
];
const row3: Item[] = [
  D("triangle"), D("dashCurve", true), D("blobArr", true), D("blobArr"), D("blobRot"), D("blobScale"), D("hex"), D("ringStar"), D("partStar"), D("ringStar"), D("ringCross"), D("partCross"), D("reshape"), D("offset"), D("vnode"), D("split"), D("scissorA"), D("scissorB"), D("merge"), D("stack"), D("rotatePt", true), "g",
  D("histo"), D("histoArrows"), D("histo"), D("histoArrows"), D("sunUp"), D("sunDown"), D("contrastUp"), D("contrastDown"), D("gammaUp"), D("gammaDown"),
];
const row4: Item[] = [
  N("selRect", true), N("selExpr", true), N("deselect", true), N("selLoc"), "g",
  D("editAttr"), D("editAttrSel", true), D("exprBox"), D("vertexGrid", true), "g",
  N("labelA", true), N("selectItem"), N("polyAdd"), N("lineAdd"), N("starAdd"), N("textAdd"), "s6", N("textBox", true), "g", N("overview"),
];

const Icon = ({ name }: { name: string }) => {
  if (name === "pan") return <Hand size={27} fill="#fff" stroke="#111" strokeWidth={1.4} />;
  return (
    <svg viewBox="0 0 25 25" className="h-[25px] w-[25px] overflow-visible">
      {icons[name]}
    </svg>
  );
};

const DropArrow = () => <div className="h-0 w-0 border-x-[4px] border-t-[4px] border-x-transparent border-t-[#555]" />;

const Grip = ({ w }: { w: string }) => (
  <div className={`flex shrink-0 justify-center ${w}`}>
    <div className="h-[17px] w-[4px] border-x border-dotted border-[#bdbdbd]" />
  </div>
);

const Sep = ({ w }: { w: string }) => (
  <div className={`flex shrink-0 justify-center ${w}`}>
    <div className="h-[26px] w-px bg-[#d4d4d4]" />
  </div>
);

const Tool = ({ item }: { item: Exclude<Item, string> }) => (
  <div className="flex shrink-0 items-center">
    <div className={`flex h-[31px] w-[33px] shrink-0 items-center justify-center ${item.on ? "rounded-[2px] border border-[#acacac] bg-[#d9d9d9]" : ""}`}>
      <div className={item.d ? "opacity-25 grayscale" : ""}>
        <Icon name={item.i} />
      </div>
    </div>
    {item.a && (
      <div className={`flex w-[12px] justify-center ${item.d ? "opacity-40" : ""}`}>
        <DropArrow />
      </div>
    )}
  </div>
);

const Toolbar = ({ items }: { items: Item[] }) => (
  <div className="flex h-[39px] shrink-0 items-center border-b border-[#bcbcbc] bg-gradient-to-b from-[#f9f9f9] to-[#eeeeee]">
    <Grip w="w-[13px]" />
    {items.map((item, idx) => {
      if (item === "g") return <Grip key={idx} w="w-[16px]" />;
      if (item === "g15") return <Grip key={idx} w="w-[15px]" />;
      if (item === "g17") return <Grip key={idx} w="w-[17px]" />;
      if (item === "s6") return <Sep key={idx} w="w-[6px]" />;
      if (item === "s7") return <Sep key={idx} w="w-[7px]" />;
      if (item === "s8") return <Sep key={idx} w="w-[8px]" />;
      return <Tool key={idx} item={item} />;
    })}
  </div>
);

const menus: [string, string, string][] = [
  ["Pro", "j", "ect"],
  ["", "E", "dit"],
  ["", "V", "iew"],
  ["", "L", "ayer"],
  ["", "S", "ettings"],
  ["", "P", "lugins"],
  ["Vect", "o", "r"],
  ["", "R", "aster"],
  ["", "D", "atabase"],
  ["", "W", "eb"],
  ["", "M", "esh"],
  ["Pro", "c", "essing"],
  ["", "H", "elp"],
];

const sideItems: { i: string; a?: boolean }[] = [
  { i: "vlinePlus" },
  { i: "rasterPlus" },
  { i: "meshPlus" },
  { i: "commaPlus" },
  { i: "featherPlus" },
  { i: "virtualPlus" },
  { i: "pgPlus", a: true },
  { i: "wmsPlus" },
  { i: "wcsPlus" },
  { i: "wfsPlus" },
  { i: "vline", a: true },
];

const miniIcons: { el: ReactNode; a?: boolean; w: string }[] = [
  { w: "w-[25px]", el: <g><path d="M2 14l8-6 6 6-8 6z" fill="#d9a441" /><path d="M3 15l4 4M6 13l5 5" stroke="#c0504d" strokeWidth="1.6" /><path d="M12 10L21 3" stroke="#b8943a" strokeWidth="2.4" /></g> },
  { w: "w-[25px]", el: <g fill="#fff" stroke="#666"><path d="M4 8h11v13H4z" /><path d="M8 5h9v14H8z" /><path d="M11 3v11" stroke="#5b8cc4" strokeWidth="1.6" /><rect x="13" y="14" width="7" height="7" rx="1" fill="#7fb07f" stroke="none" /></g> },
  { w: "w-[25px]", a: true, el: <g><path d="M1 11c5-7 14-7 19 0-5 7-14 7-19 0z" fill="#ddd" stroke="#999" /><circle cx="11" cy="11" r="4" fill="#4f7cb0" /><circle cx="11" cy="11" r="1.5" fill="#111" /></g> },
  { w: "w-[25px]", a: true, el: <g><path d="M2 3h18l-7 9v10l-4-3v-7z" fill="#5f8ec4" stroke="#3d6696" /><path d="M2 4h18" stroke="#f1d23c" strokeWidth="3" /></g> },
  { w: "w-[36px]", a: true, el: <g><text x="2" y="15" fontSize="19" fill="#6a2c80" fontFamily="Liberation Serif, serif">ε</text><rect x="11" y="13" width="8" height="8" rx="2" fill="#aaa" /></g> },
  { w: "w-[25px]", el: <g><path d="M2 4h9v15H2" fill="#eee" stroke="#888" /><rect x="3" y="8" width="3" height="3" fill="#e8952c" /><rect x="3" y="14" width="3" height="3" fill="#e8952c" /><path d="M13 2h4v10h4l-6 8-6-8h4z" fill="#4f82bf" stroke="#27486e" strokeWidth="0.6" /></g> },
  { w: "w-[25px]", el: <g><path d="M2 4h9v15H2" fill="#eee" stroke="#888" /><rect x="3" y="8" width="3" height="3" fill="#e8952c" /><rect x="3" y="14" width="3" height="3" fill="#e8952c" /><path d="M13 20h4V10h4l-6-8-6 8h4z" fill="#4f82bf" stroke="#27486e" strokeWidth="0.6" /></g> },
  { w: "w-[25px]", el: <g><rect x="3" y="3" width="14" height="14" fill="#fff" stroke="#888" /><rect x="13" y="15" width="8" height="4" fill="#d62a2a" /><path d="M14.5 17h5" stroke="#fff" /></g> },
];

export default function App() {
  return (
    <div className="flex h-[771px] w-[1428px] overflow-hidden bg-[#efefef] font-['Open_Sans',sans-serif] text-[#2e3436]">
      <div className="w-[2px] shrink-0 bg-[#332a5c]" />
      <div className="flex min-w-0 flex-1 flex-col">
        <div className="h-px shrink-0 bg-[#dcd2ee]" />
        <div className="flex h-[20px] shrink-0 items-center border-b border-[#dadada] bg-[#efefef] pl-[3px] text-[14px]">
          {menus.map((m, idx) => (
            <span key={idx} className="px-[8px] leading-[19px] whitespace-nowrap">
              {m[0]}
              <span className="underline underline-offset-2">{m[1]}</span>
              {m[2]}
            </span>
          ))}
        </div>
        <Toolbar items={row1} />
        <Toolbar items={row2} />
        <Toolbar items={row3} />
        <Toolbar items={row4} />
        <div className="flex min-h-0 flex-1">
          {/* left data source toolbar */}
          <div className="flex w-[52px] shrink-0 flex-col items-start border-r border-[#b9b9b9] bg-gradient-to-r from-[#f7f7f7] to-[#eaeaea]">
            <div className="flex h-[11px] w-full items-center justify-center pl-[4px]">
              <div className="h-[4px] w-[16px] border-y border-dotted border-[#bdbdbd]" />
            </div>
            <div className="flex flex-col">
              {sideItems.map((s) => (
                <div key={s.i} className="flex h-[32px] items-center pl-[8px]">
                  <Icon name={s.i} />
                  {s.a && (
                    <div className="ml-[5px]">
                      <DropArrow />
                    </div>
                  )}
                </div>
              ))}
            </div>
          </div>
          {/* layers panel */}
          <div className="flex w-[220px] shrink-0 flex-col bg-[#efefef]">
            <div className="flex h-[22px] items-center justify-between pr-[2px] pl-[4px] text-[14px]">
              <span>Layers</span>
              <div className="flex gap-[2px]">
                <div className="flex h-[11px] w-[11px] items-center justify-center rounded-[2px] border border-[#666]">
                  <div className="h-[5px] w-[5px] border border-[#666]" />
                </div>
                <div className="flex h-[11px] w-[11px] items-center justify-center rounded-[2px] border border-[#666] text-[10px] leading-none font-bold">×</div>
              </div>
            </div>
            <div className="flex h-[30px] items-center pb-[2px] pl-[7px]">
              {miniIcons.map((m, idx) => (
                <div key={idx} className={`flex items-center ${m.w}`}>
                  <svg viewBox="0 0 22 22" className="h-[18px] w-[18px] overflow-visible">
                    {m.el}
                  </svg>
                  {m.a && (
                    <div className="-ml-[1px]">
                      <DropArrow />
                    </div>
                  )}
                </div>
              ))}
            </div>
            <div className="flex-1 border-x border-t border-[#b5b5b5] bg-white">
              <div className="relative flex h-[20px] items-center overflow-hidden bg-[#308cc6] pl-[23px]">
                <div className="flex h-[14px] w-[14px] shrink-0 items-center justify-center border border-[#777] bg-white">
                  <svg viewBox="0 0 12 12" className="h-[10px] w-[10px]">
                    <path d="M2 6l3 4 5-8" fill="none" stroke="#111" strokeWidth="1.8" />
                  </svg>
                </div>
                <div className="ml-[7px] h-[15px] w-[15px] shrink-0 border border-[#5e8f79] bg-[#6ba68a]" />
                <span className="ml-[6px] text-[15px] font-bold whitespace-nowrap text-white underline">LC08_L1TP_232091_2021</span>
                <div className="absolute top-[1px] left-[193px] flex h-[18px] w-[16px] items-center justify-center rounded-[3px] bg-[#dfeaf3]">
                  <div className="h-[6px] w-[11px] rounded-[1px] border border-[#888]" />
                </div>
              </div>
            </div>
          </div>
          {/* splitter */}
          <div className="flex w-[6px] shrink-0 items-center justify-center bg-[#efefef]">
            <div className="mt-[234px] h-[16px] w-px border-l border-dotted border-[#999]" />
          </div>
          {/* map canvas */}
          <div className="flex-1 border-t border-l border-[#b9b9b9] bg-white">
            <svg viewBox="281 178 1146 592" className="h-full w-full">
              <polygon points="745,192 1403,317 1219,761 560,636" fill="#85b66f" stroke="#1f2a1a" strokeWidth="1" />
            </svg>
          </div>
        </div>
        <div className="h-px shrink-0 bg-[#e2d9f7]" />
      </div>
      <div className="w-px shrink-0 bg-[#e2d9f7]" />
    </div>
  );
}
